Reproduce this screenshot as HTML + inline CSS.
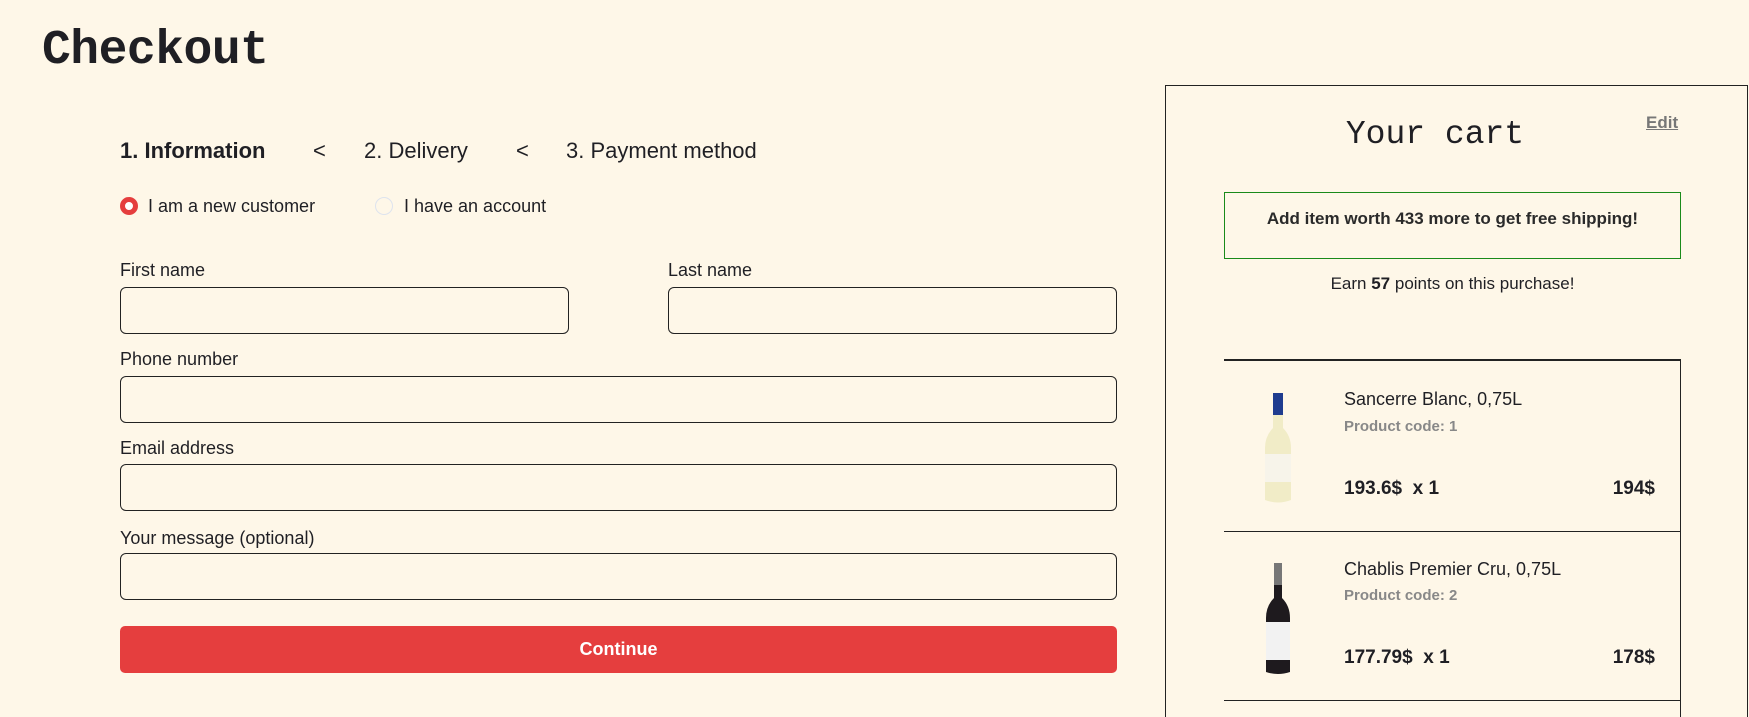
<!DOCTYPE html>
<html><head><meta charset="utf-8"><style>
*{box-sizing:border-box;margin:0;padding:0}
html,body{width:1749px;height:717px;overflow:hidden}
body{background:#fef7e8;font-family:"Liberation Sans",sans-serif;color:#1f1f24;position:relative}
.a{position:absolute;white-space:nowrap}
.t{font-family:"Liberation Mono",monospace;font-weight:bold;font-size:48px;left:42px;top:24px;letter-spacing:-0.5px}
.st{top:138px;font-size:22px}
.r{top:196px;font-size:18px}
.c{width:18px;height:18px;border-radius:50%;top:197px}
.l{font-size:18px;left:120px}
.in{border:1px solid #222;border-radius:6px;height:47px}
.n{font-size:18px;left:1344px}
.pc{font-size:15px;font-weight:bold;color:#888;left:1344px}
.p{font-size:19px;font-weight:bold}
.hl{height:1px;background:#222;left:1224px;width:457px}
</style></head><body>
<div class="a t">Checkout</div>
<div class="a st" style="left:120px;font-weight:bold">1. Information</div>
<div class="a st" style="left:313px">&lt;</div>
<div class="a st" style="left:364px">2. Delivery</div>
<div class="a st" style="left:516px">&lt;</div>
<div class="a st" style="left:566px">3. Payment method</div>
<div class="a c" style="left:120px;border:5px solid #e53e3e;background:#fff"></div>
<div class="a r" style="left:148px">I am a new customer</div>
<div class="a c" style="left:375px;border:1.5px solid #dde3ee"></div>
<div class="a r" style="left:404px">I have an account</div>
<div class="a l" style="top:260px">First name</div>
<div class="a l" style="top:260px;left:668px">Last name</div>
<div class="a in" style="left:120px;top:287px;width:449px"></div>
<div class="a in" style="left:668px;top:287px;width:449px"></div>
<div class="a l" style="top:349px">Phone number</div>
<div class="a in" style="left:120px;top:376px;width:997px"></div>
<div class="a l" style="top:438px">Email address</div>
<div class="a in" style="left:120px;top:464px;width:997px"></div>
<div class="a l" style="top:528px">Your message (optional)</div>
<div class="a in" style="left:120px;top:553px;width:997px"></div>
<div class="a" style="left:120px;top:626px;width:997px;height:47px;background:#e53e3e;border-radius:5px;color:#fff;font-weight:bold;font-size:18px;text-align:center;line-height:47px">Continue</div>

<div class="a" style="left:1165px;top:85px;width:583px;height:640px;border:1px solid #222"></div>
<div class="a" style="left:1165px;width:540px;text-align:center;top:116px;font-family:'Liberation Mono',monospace;font-size:33px">Your cart</div>
<div class="a" style="left:1646px;top:113px;font-size:17px;font-weight:bold;color:#777;text-decoration:underline">Edit</div>
<div class="a" style="left:1224px;top:192px;width:457px;height:67px;border:1px solid #1a8a1a;text-align:center;padding-top:16px;font-size:17px;font-weight:bold;color:#2a2a2a">Add item worth 433 more to get free shipping!</div>
<div class="a" style="left:1224px;width:457px;text-align:center;top:274px;font-size:17px">Earn <b>57</b> points on this purchase!</div>
<div class="a hl" style="top:359px;height:2px"></div>
<div class="a" style="left:1680px;top:360px;width:1px;height:360px;background:#222"></div>

<svg class="a" style="left:1262px;top:392px" width="32" height="115" viewBox="0 0 32 115">
<rect x="11" y="1" width="10" height="22" fill="#1f3c8f"/><path d="M11 23 L11 36 Q3 44 3 56 L3 108 Q16 113 29 108 L29 56 Q29 44 21 36 L21 23Z" fill="#f1ecc7"/><rect x="3" y="62" width="26" height="28" fill="#f7f4ea"/></svg>
<div class="a n" style="top:389px">Sancerre Blanc, 0,75L</div>
<div class="a pc" style="top:418px">Product code: 1</div>
<div class="a p" style="left:1344px;top:478px">193.6$&nbsp; x 1</div>
<div class="a p" style="left:1605px;top:478px;width:50px;text-align:right">194$</div>
<div class="a hl" style="top:531px"></div>

<svg class="a" style="left:1262px;top:562px" width="32" height="115" viewBox="0 0 32 115">
<rect x="12" y="1" width="8" height="22" fill="#777"/><path d="M12 23 L12 36 Q4 44 4 56 L4 110 Q16 114 28 110 L28 56 Q28 44 20 36 L20 23Z" fill="#1e1a1e"/><rect x="4" y="60" width="24" height="38" fill="#f2f2f2"/></svg>
<div class="a n" style="top:559px">Chablis Premier Cru, 0,75L</div>
<div class="a pc" style="top:587px">Product code: 2</div>
<div class="a p" style="left:1344px;top:647px">177.79$&nbsp; x 1</div>
<div class="a p" style="left:1605px;top:647px;width:50px;text-align:right">178$</div>
<div class="a hl" style="top:700px"></div>
</body></html>
